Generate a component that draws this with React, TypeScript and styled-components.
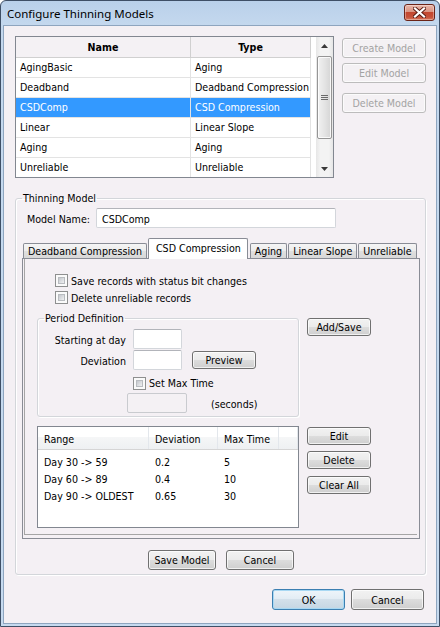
import React from "react";
import styled, { createGlobalStyle, css } from "styled-components";

const UI_FONT = `Tahoma, "DejaVu Sans Condensed", "DejaVu Sans", sans-serif`;
const UI_SIZE = "10.6px";

const GlobalStyle = createGlobalStyle`
  html, body { margin: 0; padding: 0; background: #ffffff; }
  body { font-family: ${UI_FONT}; font-size: ${UI_SIZE}; color: #000; }
  *, *::before, *::after { box-sizing: border-box; }
`;

const Window = styled.div`
  width: 440px;
  height: 627px;
  display: flex;
  flex-direction: column;
  border: 1px solid #3e4f66;
  border-radius: 6px 6px 0 0;
  background: linear-gradient(180deg, #b9d0ea 0px, #c4d8ee 24px, #c6daef 100%);
  overflow: hidden;
`;

const TitleBar = styled.div`
  height: 24px;
  flex: none;
  display: flex;
  align-items: center;
  justify-content: space-between;
  padding: 1px 4px 0 6px;
`;

const Title = styled.span`
  font-family: "Noto Sans", "Open Sans", sans-serif;
  font-size: 11.5px;
  color: #000;
`;

const CloseButton = styled.div`
  width: 31px;
  height: 17px;
  border: 1px solid #6b2418;
  border-radius: 3px;
  background: linear-gradient(180deg, #e9b6a9 0%, #da9482 46%, #c3472f 50%, #c6513a 80%, #d8785c 100%);
  box-shadow: inset 0 0 0 1px rgba(255, 255, 255, 0.35);
  display: flex;
  align-items: center;
  justify-content: center;
  margin-top: -2px;
`;

const Client = styled.div`
  flex: 1;
  margin: 0 2px 2px 2px;
  background: #f4f0f4;
  border: 1px solid #8ea5bf;
  padding: 10px 10px 0 11px;
  display: flex;
  flex-direction: column;
`;

const TopRow = styled.div`
  display: flex;
  gap: 8px;
`;

const ModelList = styled.div`
  width: 320px;
  height: 142px;
  border: 1px solid #828790;
  background: #ffffff;
  display: flex;
  overflow: hidden;
`;

const ModelTable = styled.div`
  flex: 1;
  display: flex;
  flex-direction: column;
`;

const ModelHeader = styled.div`
  display: flex;
  height: 21px;
  flex: none;
  background: #f4f1f4;
  border-bottom: 1px solid #d0d0d0;
  width: 295px;
`;

const ModelHeaderCell = styled.div<{ $w: number }>`
  width: ${(p) => p.$w}px;
  border-right: 1px solid #d0d0d0;
  font-weight: bold;
  display: flex;
  align-items: center;
  justify-content: center;
`;

const ModelRow = styled.div<{ $selected?: boolean }>`
  display: flex;
  height: 20px;
  flex: none;
  width: 295px;
  background: ${(p) => (p.$selected ? "#3399ff" : "#ffffff")};
  color: ${(p) => (p.$selected ? "#ffffff" : "#000000")};
  border-bottom: 1px solid #e3e3e3;
`;

const ModelCell = styled.div<{ $w: number }>`
  width: ${(p) => p.$w}px;
  padding: 0 0 1px 4px;
  border-right: 1px solid #e3e3e3;
  display: flex;
  align-items: center;
  white-space: nowrap;
  overflow: hidden;
`;

const ScrollBar = styled.div`
  width: 17px;
  flex: none;
  display: flex;
  flex-direction: column;
  background: linear-gradient(90deg, #e6e6e6 0%, #f3f3f3 25%, #f3f3f3 75%, #e6e6e6 100%);
`;

const ScrollArrow = styled.div`
  height: 17px;
  flex: none;
  display: flex;
  align-items: center;
  justify-content: center;
`;

const ScrollTrack = styled.div`
  flex: 1;
  padding: 2px 1px;
`;

const ScrollThumb = styled.div`
  height: 83px;
  border: 1px solid #959595;
  border-radius: 2px;
  background: linear-gradient(90deg, #f1f1f1 0%, #e4e4e4 50%, #d5d5d5 100%);
  box-shadow: inset 0 0 0 1px rgba(255, 255, 255, 0.8);
  display: flex;
  align-items: center;
  justify-content: center;
`;

const SideButtons = styled.div`
  display: flex;
  flex-direction: column;
  padding-top: 2px;
`;

const Button = styled.button<{ $w: number; $h?: number; $default?: boolean; $mt?: number; $ml?: number }>`
  width: ${(p) => p.$w}px;
  height: ${(p) => p.$h ?? 18}px;
  margin: ${(p) => p.$mt ?? 0}px 0 0 ${(p) => p.$ml ?? 0}px;
  flex: none;
  padding: 0;
  font-family: ${UI_FONT};
  font-size: ${UI_SIZE};
  color: #000;
  border: 1px solid #707070;
  border-radius: 3px;
  background: linear-gradient(180deg, #f2f2f2 0%, #ebebeb 49%, #dddddd 50%, #cfcfcf 100%);
  box-shadow: inset 0 0 0 1px rgba(255, 255, 255, 0.7);
  cursor: default;
  &:disabled {
    color: #a3a3a3;
    border-color: #bcbcbc;
    background: #f4f1f4;
    box-shadow: inset 0 0 0 1px #fbfbfb;
  }
  ${(p) =>
    p.$default &&
    css`
      border-color: #3c7fb1;
      background: linear-gradient(180deg, #eef5fa 0%, #e2ecf4 49%, #d3e0ea 50%, #c5d6e3 100%);
      box-shadow: inset 0 0 0 1px #a8d8f3;
    `}
`;

const GroupBox = styled.fieldset<{ $w?: number }>`
  margin: 0;
  min-width: 0;
  ${(p) => (p.$w ? `width: ${p.$w}px;` : "")}
  border: 1px solid #d3d6da;
  border-radius: 3px;
  box-shadow: inset 1px 1px 0 #ffffff, 1px 1px 0 #ffffff;
`;

const ThinningGroup = styled(GroupBox)`
  margin-top: 14px;
  padding: 3px 5px 4px 6px;
`;

const PeriodGroup = styled(GroupBox)`
  padding: 4px 4px 3px 6px;
  flex: none;
`;

const Legend = styled.legend`
  padding: 0 1px;
  margin-left: 0;
  line-height: 13px;
  font-size: ${UI_SIZE};
`;

const FieldRow = styled.div<{ $indent?: number; $mt?: number; $h?: number }>`
  display: flex;
  align-items: center;
  height: ${(p) => p.$h ?? 20}px;
  margin-left: ${(p) => p.$indent ?? 0}px;
  margin-top: ${(p) => p.$mt ?? 0}px;
`;

const FieldLabel = styled.span<{ $w: number; $right?: boolean }>`
  width: ${(p) => p.$w}px;
  flex: none;
  text-align: ${(p) => (p.$right ? "right" : "left")};
  padding-top: 2px;
  white-space: nowrap;
`;

const TextBox = styled.input<{ $w: number; $ml?: number }>`
  width: ${(p) => p.$w}px;
  height: 20px;
  flex: none;
  margin: 0 0 0 ${(p) => p.$ml ?? 0}px;
  padding: 1px 5px 0 5px;
  font-family: ${UI_FONT};
  font-size: ${UI_SIZE};
  color: #000;
  background: #ffffff;
  border: 1px solid #d3d6db;
  border-top-color: #b2b4ba;
  border-radius: 2px;
  outline: none;
  &:disabled {
    background: #f4f1f4;
    border-color: #c9cbcf;
  }
`;

const TabControl = styled.div`
  margin-top: 10px;
  display: flex;
  flex-direction: column;
`;

const TabStrip = styled.div`
  display: flex;
  align-items: flex-end;
  height: 20px;
  padding-left: 1px;
`;

const Tab = styled.div<{ $active?: boolean }>`
  height: 15px;
  padding: 0 4px;
  margin-right: 1px;
  border: 1px solid #898c95;
  border-bottom: none;
  border-radius: 2px 2px 0 0;
  background: linear-gradient(180deg, #f5f5f5 0%, #ececec 50%, #e0e0e0 51%, #d8d8d8 100%);
  display: flex;
  align-items: center;
  white-space: nowrap;
  ${(p) =>
    p.$active &&
    css`
      height: 21px;
      padding: 0 6px 3px 7px;
      margin-right: 2px;
      margin-bottom: -1px;
      position: relative;
      z-index: 1;
      background: #ffffff;
    `}
`;

const TabPanel = styled.div`
  border: 1px solid #898c95;
  padding: 0 2px 3px 1px;
`;

const TabPage = styled.div`
  border-left: 1px solid #a5a5a5;
  border-bottom: 1px solid #a5a5a5;
  padding: 13px 0 6px 12px;
  display: flex;
  flex-direction: column;
`;

const CheckRow = styled.label<{ $indent?: number }>`
  display: flex;
  align-items: center;
  height: 17px;
  gap: 3px;
  margin-left: ${(p) => p.$indent ?? 0}px;
  white-space: nowrap;
`;

const CheckBox = styled.span`
  width: 13px;
  height: 13px;
  flex: none;
  border: 1px solid #8e8f8f;
  background: #fafafa;
  padding: 2px;
  display: flex;
  &::after {
    content: "";
    flex: 1;
    background: linear-gradient(135deg, #c4c7cc 0%, #dcdee1 55%, #f0f0f1 100%);
    border: 1px solid #b9bcc0;
  }
`;

const SplitRow = styled.div<{ $mt: number }>`
  display: flex;
  gap: 8px;
  margin-top: ${(p) => p.$mt}px;
`;

const ButtonColumn = styled.div<{ $pt: number; $gap: number }>`
  display: flex;
  flex-direction: column;
  gap: ${(p) => p.$gap}px;
  padding-top: ${(p) => p.$pt}px;
`;

const RangeList = styled.div`
  width: 262px;
  height: 102px;
  border: 1px solid #828790;
  background: #ffffff;
  display: flex;
  flex-direction: column;
`;

const RangeHeader = styled.div`
  display: flex;
  height: 23px;
  flex: none;
  background: linear-gradient(180deg, #ffffff 0%, #ffffff 45%, #f5f6f7 46%, #eef0f2 100%);
  border-bottom: 1px solid #d5d5d5;
`;

const RangeHeaderCell = styled.div<{ $w?: number }>`
  ${(p) => (p.$w ? `width: ${p.$w}px;` : "flex: 1;")}
  padding: 1px 0 0 6px;
  border-right: 1px solid #e3e7ec;
  display: flex;
  align-items: center;
`;

const RangeRows = styled.div`
  padding-top: 3px;
`;

const RangeRow = styled.div`
  display: flex;
  height: 17px;
  align-items: center;
`;

const RangeCell = styled.div<{ $w: number }>`
  width: ${(p) => p.$w}px;
  padding-left: 6px;
  white-space: nowrap;
`;

const CenterButtons = styled.div`
  display: flex;
  justify-content: center;
  gap: 10px;
  margin-top: 11px;
`;

const DialogButtons = styled.div`
  display: flex;
  justify-content: flex-end;
  gap: 6px;
  margin-top: 14px;
  padding-right: 2px;
`;

const Suffix = styled.span`
  margin-left: 24px;
  padding-top: 2px;
`;

const models = [
  { name: "AgingBasic", type: "Aging" },
  { name: "Deadband", type: "Deadband Compression" },
  { name: "CSDComp", type: "CSD Compression", selected: true },
  { name: "Linear", type: "Linear Slope" },
  { name: "Aging", type: "Aging" },
  { name: "Unreliable", type: "Unreliable" },
];

const ranges = [
  { range: "Day 30 -> 59", dev: "0.2", max: "5" },
  { range: "Day 60 -> 89", dev: "0.4", max: "10" },
  { range: "Day 90 -> OLDEST", dev: "0.65", max: "30" },
];

const tabs = ["Deadband Compression", "CSD Compression", "Aging", "Linear Slope", "Unreliable"];

const Arrow = ({ up }: { up?: boolean }) => (
  <svg width="7" height="4" viewBox="0 0 7 4">
    <path d={up ? "M0 4 L3.5 0 L7 4 Z" : "M0 0 L7 0 L3.5 4 Z"} fill="#3a3a3a" />
  </svg>
);

const Grip = () => (
  <svg width="7" height="6" viewBox="0 0 7 6">
    <path d="M0 0.5 H7 M0 2.5 H7 M0 4.5 H7" stroke="#6a6a6a" strokeWidth="1" />
  </svg>
);

const CloseGlyph = () => (
  <svg width="13" height="11" viewBox="0 0 13 11">
    <path d="M2 1.5 L11 9.5 M11 1.5 L2 9.5" stroke="#5a1d14" strokeWidth="4" strokeLinecap="square" />
    <path d="M2 1.5 L11 9.5 M11 1.5 L2 9.5" stroke="#ffffff" strokeWidth="2.2" strokeLinecap="square" />
  </svg>
);

export default function App() {
  return (
    <>
      <GlobalStyle />
      <Window>
        <TitleBar>
          <Title>Configure Thinning Models</Title>
          <CloseButton>
            <CloseGlyph />
          </CloseButton>
        </TitleBar>
        <Client>
          <TopRow>
            <ModelList>
              <ModelTable>
                <ModelHeader>
                  <ModelHeaderCell $w={175}>Name</ModelHeaderCell>
                  <ModelHeaderCell $w={120}>Type</ModelHeaderCell>
                </ModelHeader>
                {models.map((m) => (
                  <ModelRow key={m.name} $selected={m.selected}>
                    <ModelCell $w={175}>{m.name}</ModelCell>
                    <ModelCell $w={120}>{m.type}</ModelCell>
                  </ModelRow>
                ))}
              </ModelTable>
              <ScrollBar>
                <ScrollArrow>
                  <Arrow up />
                </ScrollArrow>
                <ScrollTrack>
                  <ScrollThumb>
                    <Grip />
                  </ScrollThumb>
                </ScrollTrack>
                <ScrollArrow>
                  <Arrow />
                </ScrollArrow>
              </ScrollBar>
            </ModelList>
            <SideButtons>
              <Button $w={84} $h={20} disabled>
                Create Model
              </Button>
              <Button $w={84} $h={20} $mt={5} disabled>
                Edit Model
              </Button>
              <Button $w={84} $h={20} $mt={10} disabled>
                Delete Model
              </Button>
            </SideButtons>
          </TopRow>

          <ThinningGroup>
            <Legend>Thinning Model</Legend>
            <FieldRow $indent={5}>
              <FieldLabel $w={69}>Model Name:</FieldLabel>
              <TextBox $w={240} readOnly value="CSDComp" />
            </FieldRow>

            <TabControl>
              <TabStrip>
                {tabs.map((t) => (
                  <Tab key={t} $active={t === "CSD Compression"}>
                    {t}
                  </Tab>
                ))}
              </TabStrip>
              <TabPanel>
                <TabPage>
                  <CheckRow $indent={18}>
                    <CheckBox />
                    Save records with status bit changes
                  </CheckRow>
                  <CheckRow $indent={18}>
                    <CheckBox />
                    Delete unreliable records
                  </CheckRow>

                  <SplitRow $mt={6}>
                    <PeriodGroup $w={262}>
                      <Legend>Period Definition</Legend>
                      <FieldRow>
                        <FieldLabel $w={82} $right>
                          Starting at day
                        </FieldLabel>
                        <TextBox $w={49} $ml={7} readOnly value="" />
                      </FieldRow>
                      <FieldRow $mt={1}>
                        <FieldLabel $w={82} $right>
                          Deviation
                        </FieldLabel>
                        <TextBox $w={49} $ml={7} readOnly value="" />
                        <Button $w={64} $ml={10}>
                          Preview
                        </Button>
                      </FieldRow>
                      <FieldRow $indent={89} $mt={5} $h={16}>
                        <CheckRow>
                          <CheckBox />
                          Set Max Time
                        </CheckRow>
                      </FieldRow>
                      <FieldRow $indent={83} $mt={2}>
                        <TextBox $w={60} disabled value="" readOnly />
                        <Suffix>(seconds)</Suffix>
                      </FieldRow>
                    </PeriodGroup>
                    <ButtonColumn $pt={6} $gap={6}>
                      <Button $w={64}>Add/Save</Button>
                    </ButtonColumn>
                  </SplitRow>

                  <SplitRow $mt={9}>
                    <RangeList>
                      <RangeHeader>
                        <RangeHeaderCell $w={111}>Range</RangeHeaderCell>
                        <RangeHeaderCell $w={69}>Deviation</RangeHeaderCell>
                        <RangeHeaderCell $w={61}>Max Time</RangeHeaderCell>
                        <RangeHeaderCell />
                      </RangeHeader>
                      <RangeRows>
                        {ranges.map((r) => (
                          <RangeRow key={r.range}>
                            <RangeCell $w={111}>{r.range}</RangeCell>
                            <RangeCell $w={69}>{r.dev}</RangeCell>
                            <RangeCell $w={61}>{r.max}</RangeCell>
                          </RangeRow>
                        ))}
                      </RangeRows>
                    </RangeList>
                    <ButtonColumn $pt={1} $gap={6}>
                      <Button $w={64}>Edit</Button>
                      <Button $w={64}>Delete</Button>
                      <Button $w={64} $mt={1}>
                        Clear All
                      </Button>
                    </ButtonColumn>
                  </SplitRow>
                </TabPage>
              </TabPanel>
            </TabControl>

            <CenterButtons>
              <Button $w={68} $h={20}>
                Save Model
              </Button>
              <Button $w={68} $h={20}>
                Cancel
              </Button>
            </CenterButtons>
          </ThinningGroup>

          <DialogButtons>
            <Button $w={73} $h={21} $default>
              OK
            </Button>
            <Button $w={73} $h={21}>
              Cancel
            </Button>
          </DialogButtons>
        </Client>
      </Window>
    </>
  );
}
